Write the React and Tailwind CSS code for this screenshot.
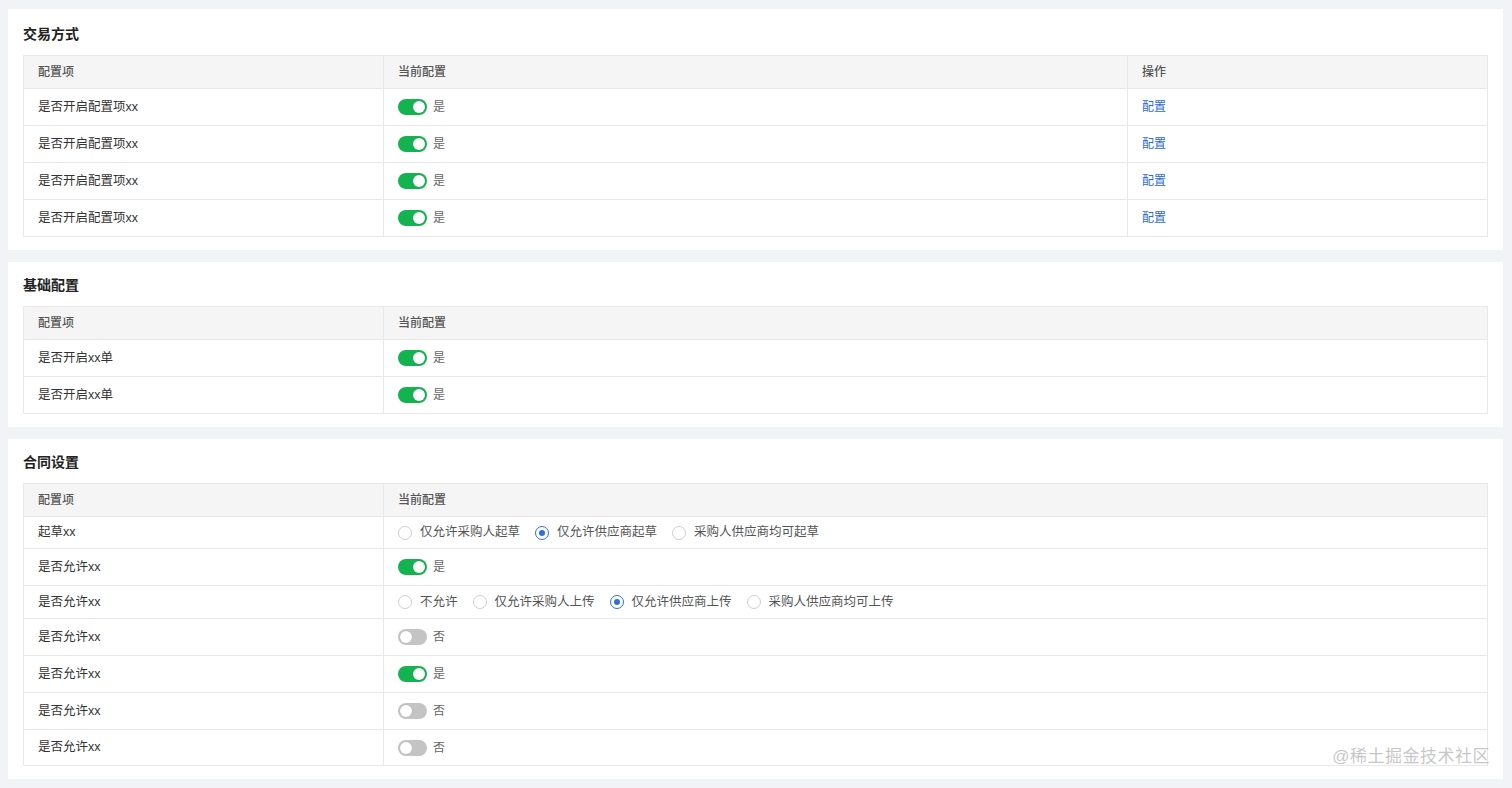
import React from "react";

const FONT = { fontFamily: '"Liberation Sans", "Noto Sans CJK SC", sans-serif' };

function Switch({ on }) {
  return (
    <span className="flex items-center gap-[6px]">
      <span
        className={
          "relative inline-flex h-[16px] w-[29px] items-center rounded-full " +
          (on ? "bg-[#13b34f] justify-end" : "bg-[#c4c4c4] justify-start")
        }
      >
        <span className="mx-[2px] h-[12px] w-[12px] rounded-full bg-white shadow-[0_0_1px_rgba(0,0,0,0.2)]" />
      </span>
      <span className="text-[12px] text-[#666]">{on ? "是" : "否"}</span>
    </span>
  );
}

function Radio({ checked, label }) {
  return (
    <span className="flex items-center gap-[8px] mr-[15px]">
      <span
        className={
          "flex h-[14px] w-[14px] items-center justify-center rounded-full border bg-white " +
          (checked ? "border-[#2f6fdb]" : "border-[#cfcfcf]")
        }
      >
        {checked && <span className="h-[6px] w-[6px] rounded-full bg-[#2f6fdb]" />}
      </span>
      <span className="text-[12.5px] text-[#555]">{label}</span>
    </span>
  );
}

function Row({ h, cells, widths }) {
  return (
    <div className={"flex border-t border-[#e8e8e8] " + h}>
      {cells.map((c, i) => (
        <div
          key={i}
          className={
            "flex items-center px-[14px] " +
            widths[i] +
            (i < cells.length - 1 ? " border-r border-[#e8e8e8]" : "")
          }
        >
          {c}
        </div>
      ))}
    </div>
  );
}

function Card({ title, children, pt }) {
  return (
    <div className={"bg-white px-[15px] pb-[13px] " + pt}>
      <div className="h-[22px] text-[14px] font-bold leading-[22px] text-[#222] mb-[10px]">{title}</div>
      <div className="border-x border-b border-[#e8e8e8]">{children}</div>
    </div>
  );
}

function Header({ cols, widths }) {
  return (
    <div className="flex h-[33px] bg-[#f5f5f5] border-t border-[#e8e8e8]">
      {cols.map((c, i) => (
        <div
          key={i}
          className={
            "flex items-center px-[14px] text-[12px] font-medium text-[#555] " +
            widths[i] +
            (i < cols.length - 1 ? " border-r border-[#e8e8e8]" : "")
          }
        >
          {c}
        </div>
      ))}
    </div>
  );
}

const T = (s) => <span className="text-[12.5px] text-[#333]">{s}</span>;
const link = <span className="text-[12px] text-[#2d6bd6]">配置</span>;

export default function App() {
  const w3 = ["w-[360px]", "flex-1", "w-[359px]"];
  const w2 = ["w-[360px]", "flex-1"];
  return (
    <div style={FONT} className="relative min-h-[788px] bg-[#f2f3f6] pl-[8px] pr-[9px] pt-[9px] pb-[9px]">
      <div className="flex flex-col gap-[12px]">
        <Card title="交易方式" pt="pt-[14px]">
          <Header cols={["配置项", "当前配置", "操作"]} widths={w3} />
          {[0, 1, 2, 3].map((i) => (
            <Row key={i} h="h-[37px]" widths={w3} cells={[T("是否开启配置项xx"), <Switch on />, link]} />
          ))}
        </Card>
        <Card title="基础配置" pt="pt-[12px]">
          <Header cols={["配置项", "当前配置"]} widths={w2} />
          {[0, 1].map((i) => (
            <Row key={i} h="h-[37px]" widths={w2} cells={[T("是否开启xx单"), <Switch on />]} />
          ))}
        </Card>
        <Card title="合同设置" pt="pt-[12px]">
          <Header cols={["配置项", "当前配置"]} widths={w2} />
          <Row
            h="h-[32px]"
            widths={w2}
            cells={[
              T("起草xx"),
              <span className="flex items-center">
                <Radio label="仅允许采购人起草" />
                <Radio checked label="仅允许供应商起草" />
                <Radio label="采购人供应商均可起草" />
              </span>,
            ]}
          />
          <Row h="h-[37px]" widths={w2} cells={[T("是否允许xx"), <Switch on />]} />
          <Row
            h="h-[33px]"
            widths={w2}
            cells={[
              T("是否允许xx"),
              <span className="flex items-center">
                <Radio label="不允许" />
                <Radio label="仅允许采购人上传" />
                <Radio checked label="仅允许供应商上传" />
                <Radio label="采购人供应商均可上传" />
              </span>,
            ]}
          />
          <Row h="h-[37px]" widths={w2} cells={[T("是否允许xx"), <Switch on={false} />]} />
          <Row h="h-[37px]" widths={w2} cells={[T("是否允许xx"), <Switch on />]} />
          <Row h="h-[37px]" widths={w2} cells={[T("是否允许xx"), <Switch on={false} />]} />
          <Row h="h-[36px]" widths={w2} cells={[T("是否允许xx"), <Switch on={false} />]} />
        </Card>
      </div>
      <div className="pointer-events-none absolute right-[22px] top-[744px] text-[17px] text-[#b8b8b8]/80 tracking-[0.5px]">
        @稀土掘金技术社区
      </div>
    </div>
  );
}
